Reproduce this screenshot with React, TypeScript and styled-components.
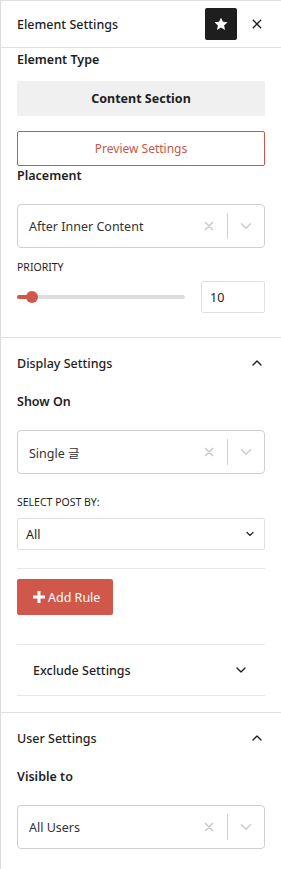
import React, { useState } from "react";
import styled, { createGlobalStyle } from "styled-components";

const GlobalStyle = createGlobalStyle`
  html, body {
    margin: 0;
    padding: 0;
    background: #fff;
  }
  body {
    font-family: "Noto Sans", "Noto Sans CJK KR", sans-serif;
    color: #1e1e1e;
  }
  * {
    box-sizing: border-box;
  }
`;

const Panel = styled.div`
  width: 281px;
  min-height: 869px;
  border-left: 1px solid #dcdcdc;
  border-top: 1px solid #e0e0e0;
  background: #fff;
`;

const Header = styled.div`
  height: 47px;
  display: flex;
  align-items: center;
  padding: 0 8px 0 16px;
  border-bottom: 1px solid #e0e0e0;
`;

const HeaderTitle = styled.div`
  flex: 1;
  font-size: 12.5px;
  font-weight: 500;
`;

const StarButton = styled.button`
  width: 32px;
  height: 32px;
  border: none;
  border-radius: 2px;
  background: #1e1e1e;
  display: flex;
  align-items: center;
  justify-content: center;
  padding: 0;
  margin-right: 4px;
`;

const CloseButton = styled.button`
  width: 32px;
  height: 32px;
  border: none;
  background: transparent;
  display: flex;
  align-items: center;
  justify-content: center;
  padding: 0;
`;

const Section = styled.div<{ $border?: boolean; $bottom?: number }>`
  padding: 0 16px ${(p) => p.$bottom ?? 24}px 16px;
  border-bottom: ${(p) => (p.$border ? "1px solid #e0e0e0" : "none")};
`;

const FieldLabel = styled.div<{ $top?: number }>`
  font-size: 12.5px;
  font-weight: 600;
  margin-top: ${(p) => p.$top ?? 0}px;
  line-height: 20px;
`;

const SmallLabel = styled.div<{ $top?: number }>`
  font-size: 10.5px;
  text-transform: uppercase;
  line-height: 16px;
  margin-top: ${(p) => p.$top ?? 0}px;
`;

const TypeBox = styled.div`
  height: 35px;
  margin-top: 11px;
  background: #f0f0f0;
  border-radius: 2px;
  display: flex;
  align-items: center;
  justify-content: center;
  font-size: 12.5px;
  font-weight: 700;
`;

const OutlineButton = styled.button`
  width: 100%;
  height: 35px;
  margin-top: 15px;
  border: 1px solid #c8574a;
  border-radius: 2px;
  background: #fff;
  color: #c8574a;
  font-family: inherit;
  font-size: 12px;
`;

const SelectBox = styled.div<{ $top?: number }>`
  height: 44px;
  margin-top: ${(p) => p.$top ?? 0}px;
  border: 1px solid #cfcfcf;
  border-radius: 4px;
  display: flex;
  align-items: center;
  padding-left: 11px;
`;

const SelectValue = styled.div`
  flex: 1;
  font-size: 12.5px;
  color: #333;
`;

const Indicator = styled.div`
  width: 36px;
  height: 100%;
  display: flex;
  align-items: center;
  justify-content: center;
`;

const Separator = styled.span`
  width: 1px;
  height: 26px;
  background: #cfcfcf;
`;

const SliderRow = styled.div`
  display: flex;
  align-items: center;
  gap: 16px;
  margin-top: 6px;
`;

const Track = styled.div`
  flex: 1;
  height: 4px;
  border-radius: 2px;
  background: #ddd;
  position: relative;
`;

const TrackFill = styled.div`
  height: 100%;
  border-radius: 2px;
  background: #d0584a;
`;

const Thumb = styled.span`
  position: absolute;
  top: 50%;
  width: 12px;
  height: 12px;
  border-radius: 50%;
  background: #d0584a;
  transform: translate(-50%, -50%);
`;

const NumberInput = styled.div`
  width: 64px;
  height: 32px;
  border: 1px solid #e0e0e0;
  border-radius: 2px;
  display: flex;
  align-items: center;
  padding-left: 8px;
  font-size: 12.5px;
`;

const SectionHead = styled.div`
  display: flex;
  align-items: center;
  justify-content: space-between;
  height: 50px;
  font-size: 12.5px;
  font-weight: 500;
`;

const NativeSelect = styled.div`
  height: 32px;
  margin-top: 8px;
  border: 1px solid #e0e0e0;
  border-radius: 2px;
  display: flex;
  align-items: center;
  justify-content: space-between;
  padding: 0 8px;
  font-size: 12.5px;
`;

const Rule = styled.hr<{ $top: number }>`
  border: none;
  border-top: 1px solid #e6e6e6;
  margin: ${(p) => p.$top}px 0 0 0;
`;

const AddButton = styled.button`
  margin-top: 10px;
  height: 36px;
  padding: 0 13px 0 15px;
  border: none;
  border-radius: 2px;
  background: #d0584a;
  color: #fff;
  font-family: inherit;
  font-size: 12.5px;
  display: flex;
  align-items: center;
  gap: 2px;
`;

const SubHead = styled.div`
  display: flex;
  align-items: center;
  justify-content: space-between;
  height: 50px;
  padding: 0 16px;
  font-size: 12.5px;
  font-weight: 500;
`;

const Chevron = ({ up, color = "#1e1e1e", size = 16 }: { up?: boolean; color?: string; size?: number }) => (
  <svg width={size} height={size} viewBox="0 0 24 24" fill="none">
    <path
      d={up ? "M6 15l6-6 6 6" : "M6 9l6 6 6-6"}
      stroke={color}
      strokeWidth={2}
      strokeLinecap="round"
      strokeLinejoin="round"
    />
  </svg>
);

const Select = ({ value, top }: { value: string; top?: number }) => (
  <SelectBox $top={top}>
    <SelectValue>{value}</SelectValue>
    <Indicator>
      <svg width="14" height="14" viewBox="0 0 20 20">
        <path d="M5 5l10 10M15 5L5 15" stroke="#ccc" strokeWidth="2.4" strokeLinecap="round" />
      </svg>
    </Indicator>
    <Separator />
    <Indicator>
      <Chevron color="#ccc" size={18} />
    </Indicator>
  </SelectBox>
);

const App: React.FC = () => {
  const [priority] = useState<number>(10);
  const pct = 9;

  return (
    <>
      <GlobalStyle />
      <Panel>
        <Header>
          <HeaderTitle>Element Settings</HeaderTitle>
          <StarButton>
            <svg width="16" height="16" viewBox="0 0 24 24">
              <path
                d="M12 2.5l2.9 6.3 6.9.7-5.2 4.6 1.5 6.8L12 17.4 5.9 20.9l1.5-6.8L2.2 9.5l6.9-.7z"
                fill="#fff"
                strokeLinejoin="round"
              />
            </svg>
          </StarButton>
          <CloseButton>
            <svg width="14" height="14" viewBox="0 0 20 20">
              <path d="M4 4l12 12M16 4L4 16" stroke="#1e1e1e" strokeWidth="1.8" />
            </svg>
          </CloseButton>
        </Header>

        <Section $border>
          <FieldLabel $top={2}>Element Type</FieldLabel>
          <TypeBox>Content Section</TypeBox>
          <OutlineButton>Preview Settings</OutlineButton>
          <FieldLabel $top={0}>Placement</FieldLabel>
          <Select value="After Inner Content" top={18} />
          <SmallLabel $top={11}>Priority</SmallLabel>
          <SliderRow>
            <Track>
              <TrackFill style={{ width: `${pct}%` }} />
              <Thumb style={{ left: `${pct}%` }} />
            </Track>
            <NumberInput>{priority}</NumberInput>
          </SliderRow>
        </Section>

        <Section $border $bottom={16}>
          <SectionHead>
            <span>Display Settings</span>
            <Chevron up />
          </SectionHead>
          <FieldLabel $top={4}>Show On</FieldLabel>
          <Select value="Single 글" top={18} />
          <SmallLabel $top={20}>Select post by:</SmallLabel>
          <NativeSelect>
            <span>All</span>
            <svg width="12" height="12" viewBox="0 0 24 24" fill="none">
              <path d="M6 9l6 6 6-6" stroke="#1e1e1e" strokeWidth="2.4" strokeLinecap="round" />
            </svg>
          </NativeSelect>
          <Rule $top={18} />
          <AddButton>
            <svg width="14" height="14" viewBox="0 0 14 14">
              <path d="M7 1v12M1 7h12" stroke="#fff" strokeWidth="3" />
            </svg>
            Add Rule
          </AddButton>
          <Rule $top={29} />
          <SubHead>
            <span>Exclude Settings</span>
            <Chevron />
          </SubHead>
          <Rule $top={0} />
        </Section>

        <Section>
          <SectionHead>
            <span>User Settings</span>
            <Chevron up />
          </SectionHead>
          <FieldLabel $top={4}>Visible to</FieldLabel>
          <Select value="All Users" top={18} />
        </Section>
      </Panel>
    </>
  );
};

export default App;
